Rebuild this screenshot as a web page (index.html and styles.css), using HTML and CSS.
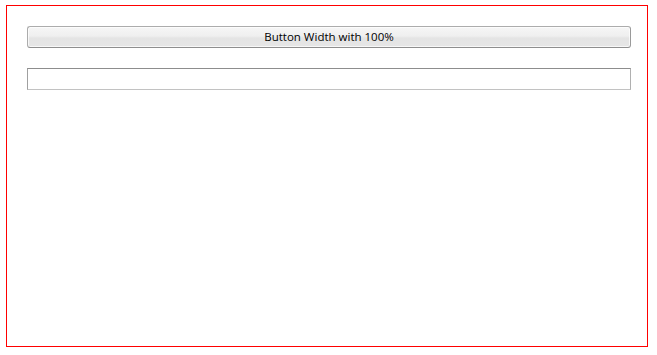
FILE: index.html
```html
<!DOCTYPE html>
<html>
<head>
<meta charset="utf-8">
<link rel="stylesheet" href="styles.css">
</head>
<body>
<div class="frame">
  <button class="wide-btn">Button Width with 100%</button>
  <input class="wide-input" type="text">
</div>
</body>
</html>
```
FILE: styles.css
```css
html, body {
  margin: 0;
  padding: 0;
  background: #fff;
}
body {
  font-family: "Open Sans", "DejaVu Sans", sans-serif;
}
.frame {
  box-sizing: border-box;
  margin: 5px 0 0 6px;
  width: 642px;
  height: 342px;
  border: 1px solid #ff0000;
  padding: 20px 16px 0 20px;
  display: flex;
  flex-direction: column;
  gap: 20px;
}
.wide-btn {
  box-sizing: border-box;
  width: 604px;
  height: 22px;
  margin: 0;
  padding: 0;
  border: 1px solid #acacac;
  border-bottom-color: #8e8e8e;
  border-right-color: #9a9a9a;
  border-radius: 3px;
  background: linear-gradient(to bottom, #f6f6f6 0%, #efefef 45%, #e4e4e4 55%, #e6e6e6 100%);
  box-shadow: inset 0 0 0 1px rgba(255,255,255,0.7);
  font-family: "Open Sans", "DejaVu Sans", sans-serif;
  font-size: 11.5px;
  color: #000;
  line-height: 18px;
}
.wide-input {
  box-sizing: border-box;
  width: 604px;
  height: 22px;
  margin: 0;
  padding: 0 3px;
  border: 1px solid #abadb3;
  border-top-color: #8d8d8d;
  border-left-color: #a0a0a0;
  border-bottom-color: #c2c2c2;
  border-right-color: #b0b0b0;
  border-radius: 0;
  background: #fff;
  outline: none;
}
```
